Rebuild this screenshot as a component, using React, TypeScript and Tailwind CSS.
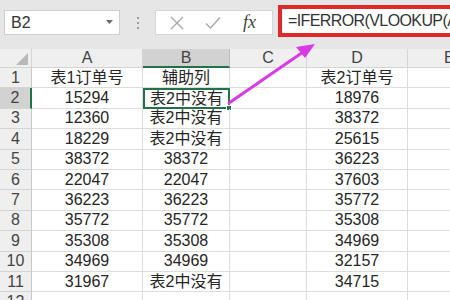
import React from "react";

const rows: [string, string, string, string, string][] = [
  ["1", "表1订单号", "辅助列", "", "表2订单号"],
  ["2", "15294", "表2中没有", "", "18976"],
  ["3", "12360", "表2中没有", "", "38372"],
  ["4", "18229", "表2中没有", "", "25615"],
  ["5", "38372", "38372", "", "36223"],
  ["6", "22047", "22047", "", "37603"],
  ["7", "36223", "36223", "", "35772"],
  ["8", "35772", "35772", "", "35308"],
  ["9", "35308", "35308", "", "34969"],
  ["10", "34969", "34969", "", "32157"],
  ["11", "31967", "表2中没有", "", "34715"],
  ["12", "", "", "", ""],
];

const gridCols = "grid grid-cols-[32px_111px_87px_77px_101px_1fr]";

export default function App() {
  return (
    <div
      className="relative w-[450px] h-[300px] overflow-hidden bg-white text-[#262626]"
      style={{ fontFamily: '"Liberation Sans", "Noto Sans CJK SC", sans-serif' }}
    >
      {/* top bar */}
      <div className="h-[49px] bg-[#e6e6e6] flex items-start pt-[10px]">
        <div className="ml-[4px] w-[116px] h-[25px] bg-white border border-[#cfcfcf] flex items-center justify-between pl-[6px] pr-[6px]">
          <span className="text-[16px] text-[#333]">B2</span>
          <svg width="7" height="5" viewBox="0 0 7 5">
            <path d="M0 0 L7 0 L3.5 4 Z" fill="#6b6b6b" />
          </svg>
        </div>
        <div className="w-[35px] h-[25px] flex flex-col items-center justify-center gap-[3px]">
          <div className="w-[2px] h-[2px] bg-[#9a9a9a]" />
          <div className="w-[2px] h-[2px] bg-[#9a9a9a]" />
          <div className="w-[2px] h-[2px] bg-[#9a9a9a]" />
        </div>
        <div className="w-[118px] h-[25px] bg-white border border-[#d6d6d6] flex items-center">
          <svg width="14" height="14" viewBox="0 0 14 14" className="ml-[14px]">
            <path d="M1 1 L13 13 M13 1 L1 13" stroke="#a8a8a8" strokeWidth="1.4" />
          </svg>
          <svg width="16" height="14" viewBox="0 0 16 14" className="ml-[21px]">
            <path d="M1 7.5 L5.5 12 L15 1.5" stroke="#a8a8a8" strokeWidth="1.4" fill="none" />
          </svg>
          <span
            className="ml-[22px] text-[18px] italic text-[#444]"
            style={{ fontFamily: '"Liberation Serif", serif' }}
          >
            fx
          </span>
        </div>
        <div className="ml-[5px] mt-[-5px] flex-1 h-[32px] bg-white border-4 border-[#e02a2a] border-r-0 flex items-center pl-[6px] whitespace-nowrap overflow-hidden">
          <span className="text-[16px] tracking-[-0.6px] text-[#333]">=IFERROR(VLOOKUP(A2,D:D,1,0),"表2中没有")</span>
        </div>
      </div>

      {/* column header */}
      <div className={`${gridCols} h-[19px] bg-[#efefef] text-[16px] text-[#444] leading-none`}>
        <div className="relative border-r border-b border-[#d4d4d4]">
          <svg width="12" height="12" viewBox="0 0 12 12" className="absolute right-[3px] bottom-[2px]">
            <path d="M12 0 L12 12 L0 12 Z" fill="#b9b9b9" />
          </svg>
        </div>
        <div className="flex items-center justify-center border-r border-b border-[#d4d4d4]">A</div>
        <div className="flex items-center justify-center bg-[#d2d2d2] border-r border-[#bdbdbd] border-b-2 border-b-[#217346]">B</div>
        <div className="flex items-center justify-center border-r border-b border-[#d4d4d4]">C</div>
        <div className="flex items-center justify-center border-r border-b border-[#d4d4d4]">D</div>
        <div className="flex items-center justify-start pl-[36px] border-b border-[#d4d4d4]">E</div>
      </div>

      {/* rows */}
      {rows.map((r, i) => (
        <div key={i} className={`${gridCols} h-[20.4px] text-[16px] leading-none`}>
          <div
            className={`flex items-center justify-center border-b border-[#d4d4d4] text-[#444] ${
              i === 1 ? "bg-[#d2d2d2] border-r-2 border-r-[#217346]" : "bg-[#efefef] border-r border-r-[#c8c8c8]"
            }`}
          >
            {r[0]}
          </div>
          <div className="flex items-center justify-center border-r border-b border-[#dcdcdc]">{r[1]}</div>
          <div
            className={`relative flex items-center justify-center ${
              i === 1 ? "border-2 border-[#217346]" : "border-r border-b border-[#dcdcdc]"
            }`}
          >
            {r[2]}
            {i === 1 && (
              <div className="absolute right-[-4px] bottom-[-4px] w-[6px] h-[6px] bg-[#217346] border border-white" />
            )}
          </div>
          <div className="flex items-center justify-center border-r border-b border-[#dcdcdc]">{r[3]}</div>
          <div className="flex items-center justify-center border-r border-b border-[#dcdcdc]">{r[4]}</div>
          <div className="border-b border-[#dcdcdc]" />
        </div>
      ))}

      {/* magenta arrow */}
      <svg className="absolute left-0 top-0 pointer-events-none" width="450" height="300" viewBox="0 0 450 300">
        <line x1="229" y1="103" x2="306" y2="50" stroke="#d63be6" strokeWidth="3" strokeLinecap="round" />
        <path d="M315 44 L296 47 L305 58 Z" fill="#d63be6" />
      </svg>
    </div>
  );
}
